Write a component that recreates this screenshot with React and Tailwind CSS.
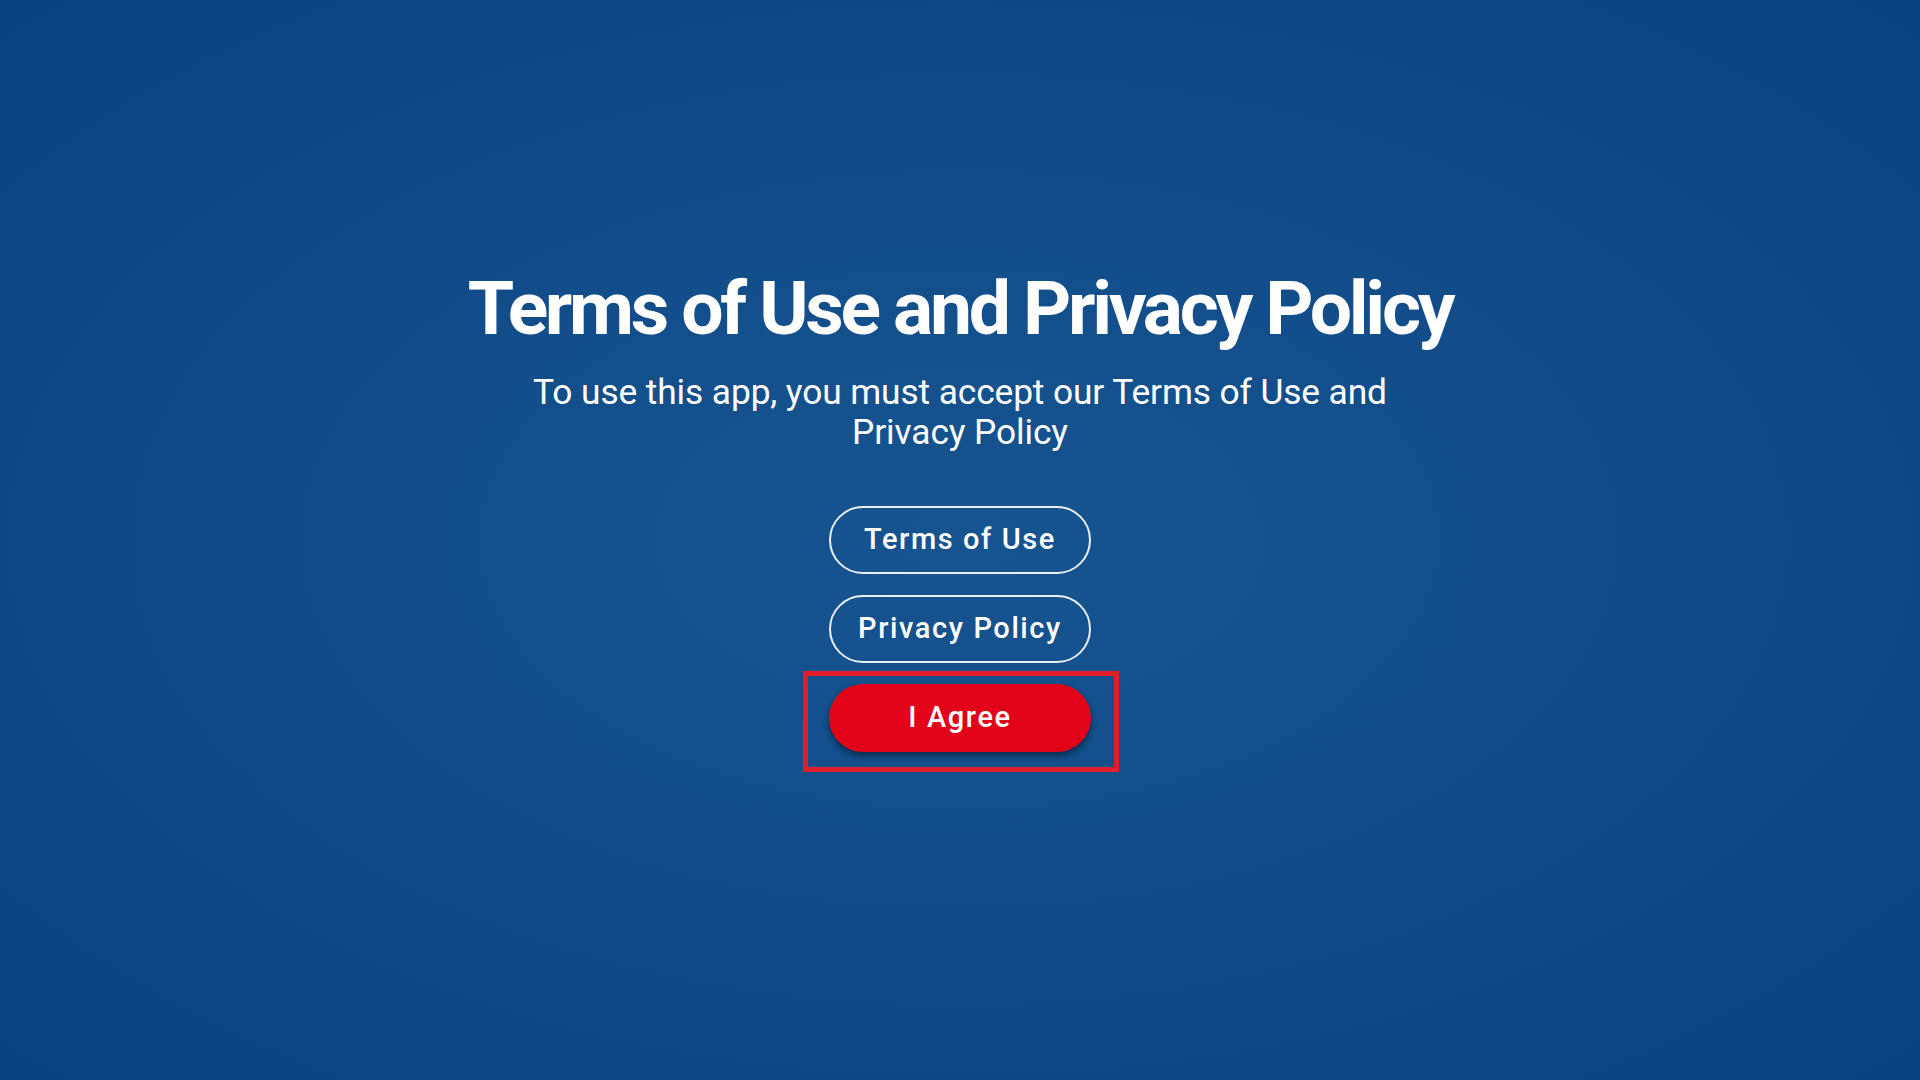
export default function App() {
  return (
    <div
      className="w-[1920px] h-[1080px] overflow-hidden flex flex-col items-center bg-[radial-gradient(ellipse_at_center,#17548f_0%,#124d8a_45%,#0a4180_100%)] text-white"
      style={{ fontFamily: "Roboto, 'Noto Sans', sans-serif" }}
    >
      <h1 className="mt-[263px] text-[75px] leading-[90px] font-bold tracking-[-3.3px] text-white">
        Terms of Use and Privacy Policy
      </h1>
      <p className="mt-[19px] text-[35.3px] leading-[40px] text-center w-[900px] font-normal tracking-[-0.1px]">
        To use this app, you must accept our Terms of Use and Privacy Policy
      </p>
      <div className="mt-[54px] flex flex-col items-center gap-[21px]">
        <button className="w-[262px] h-[68px] rounded-full border-2 border-white/90 text-[29px] font-medium tracking-[1.6px] text-white">
          Terms of Use
        </button>
        <button className="w-[262px] h-[68px] rounded-full border-2 border-white/90 text-[29px] font-medium tracking-[1.6px] text-white">
          Privacy Policy
        </button>
        <div className="relative">
          <button className="w-[262px] h-[68px] rounded-full bg-[#e2031b] text-[29px] font-medium tracking-[1.6px] text-white shadow-[0_4px_6px_rgba(0,0,0,0.45)]">
            I Agree
          </button>
          <div className="absolute -left-[26px] -top-[13px] w-[316px] h-[101px] border-[5px] border-[#e41d2b] pointer-events-none" />
        </div>
      </div>
    </div>
  );
}
